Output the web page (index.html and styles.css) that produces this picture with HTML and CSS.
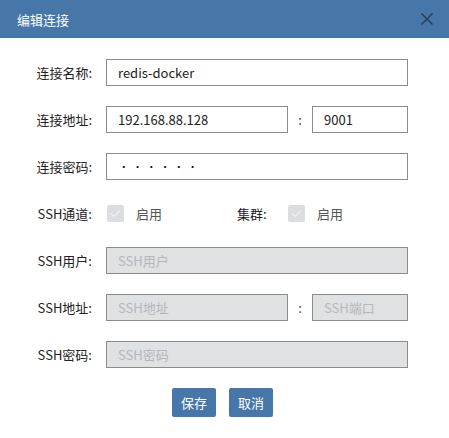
FILE: index.html
```html
<!DOCTYPE html>
<html lang="zh-CN">
<head>
<meta charset="utf-8">
<title>编辑连接</title>
<link rel="stylesheet" href="styles.css">
</head>
<body>
<div class="dialog">
  <div class="header">
    <span class="title">编辑连接</span>
    <svg class="close" width="12" height="12" viewBox="0 0 12 12"><path d="M0.5 0.5 L11.5 11.5 M11.5 0.5 L0.5 11.5" stroke="#2d3b4e" stroke-width="1.4" fill="none"/></svg>
  </div>
  <div class="form">
    <div class="row">
      <label class="label">连接名称:</label>
      <div class="field"><div class="input">redis-docker</div></div>
    </div>
    <div class="row">
      <label class="label">连接地址:</label>
      <div class="field split">
        <div class="input host">192.168.88.128</div>
        <span class="colon">:</span>
        <div class="input port">9001</div>
      </div>
    </div>
    <div class="row">
      <label class="label">连接密码:</label>
      <div class="field"><div class="input pwd">······</div></div>
    </div>
    <div class="row">
      <label class="label">SSH通道:</label>
      <div class="field checks">
        <span class="check"><span class="box"><svg width="11" height="9" viewBox="0 0 11 9"><path d="M1 4.5 L4 7.5 L10 1.5" stroke="#ffffff" stroke-width="1" fill="none"/></svg></span><span class="ctext">启用</span></span>
        <span class="sublabel">集群:</span>
        <span class="check"><span class="box"><svg width="11" height="9" viewBox="0 0 11 9"><path d="M1 4.5 L4 7.5 L10 1.5" stroke="#ffffff" stroke-width="1" fill="none"/></svg></span><span class="ctext">启用</span></span>
      </div>
    </div>
    <div class="row">
      <label class="label">SSH用户:</label>
      <div class="field"><div class="input disabled">SSH用户</div></div>
    </div>
    <div class="row">
      <label class="label">SSH地址:</label>
      <div class="field split">
        <div class="input host disabled">SSH地址</div>
        <span class="colon">:</span>
        <div class="input port disabled">SSH端口</div>
      </div>
    </div>
    <div class="row">
      <label class="label">SSH密码:</label>
      <div class="field"><div class="input disabled">SSH密码</div></div>
    </div>
    <div class="buttons">
      <button class="btn">保存</button>
      <button class="btn">取消</button>
    </div>
  </div>
</div>
</body>
</html>
```
FILE: styles.css
```css
html, body {
  margin: 0;
  padding: 0;
  background: #ffffff;
}
body {
  font-family: "Noto Sans CJK SC", "Noto Sans", sans-serif;
  font-size: 13px;
  color: #222222;
}
.header {
  height: 38px;
  background: #4677a8;
  display: flex;
  align-items: center;
  justify-content: space-between;
  padding: 0 16px 0 17px;
}
.title {
  color: #ffffff;
  font-size: 13px;
}
.form {
  padding-top: 21px;
  display: flex;
  flex-direction: column;
  gap: 20px;
}
.row {
  display: grid;
  grid-template-columns: 92px 302px;
  column-gap: 14px;
  height: 27px;
  align-items: center;
}
.label {
  text-align: right;
  line-height: 27px;
}
.field {
  height: 27px;
  display: flex;
  align-items: center;
}
.input {
  box-sizing: border-box;
  height: 27px;
  width: 302px;
  border: 1px solid #8c8c8c;
  padding: 0 11px;
  line-height: 25px;
  background: #ffffff;
  color: #222222;
  white-space: nowrap;
  overflow: hidden;
}
.split .host {
  width: 182px;
}
.split .port {
  width: 96px;
}
.colon {
  width: 24px;
  text-align: center;
  color: #444444;
}
.pwd {
  font-family: "Liberation Sans", sans-serif;
  letter-spacing: 9.4px;
  font-weight: bold;
  padding-left: 15px;
  color: #111111;
}
.disabled {
  background: #e0e1e3;
  color: #b3b7bd;
}
.checks {
  gap: 0;
}
.check {
  display: flex;
  align-items: center;
}
.box {
  width: 17px;
  height: 17px;
  margin-left: 1px;
  background: #dcdde0;
  border-radius: 2px;
  display: flex;
  align-items: center;
  justify-content: center;
}
.ctext {
  margin-left: 12px;
  color: #555555;
}
.sublabel {
  margin-left: 75px;
  width: 50px;
}
.buttons {
  display: flex;
  justify-content: center;
  gap: 13px;
  padding-right: 4px;
}
.btn {
  width: 44px;
  height: 29px;
  border: none;
  border-radius: 2px;
  background: #4677a8;
  color: #ffffff;
  font-family: "Noto Sans CJK SC", sans-serif;
  font-size: 13px;
  padding: 0;
}
```
